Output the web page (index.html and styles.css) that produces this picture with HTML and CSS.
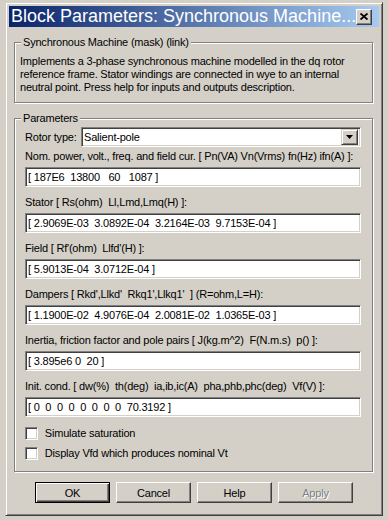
FILE: index.html
```html
<!DOCTYPE html>
<html lang="en">
<head>
    <meta charset="UTF-8">
    <title>Block Parameters: Synchronous Machine</title>
    <link rel="stylesheet" href="styles.css">
</head>
<body>
    <div class="window">
        <div class="titlebar">
            <span class="title">Block Parameters: Synchronous Machine...</span>
            <span class="close-btn">
                <svg width="8" height="7" viewBox="0 0 8 7"><path d="M0.5 0.5 L7.5 6.5 M7.5 0.5 L0.5 6.5" stroke="#000" stroke-width="1.8" fill="none"/></svg>
            </span>
        </div>

        <fieldset class="group">
            <legend>Synchronous Machine (mask) (link)</legend>
            <div class="desc">
                Implements a 3-phase synchronous machine modelled in the dq rotor<br>
                reference frame. Stator windings are connected in wye to an internal<br>
                neutral point. Press help for inputs and outputs description.
            </div>
        </fieldset>

        <fieldset class="group">
            <legend>Parameters</legend>
            <div class="params">
                <div class="rotor-row">
                    <label>Rotor type:</label>
                    <div class="dropdown">
                        <span class="dropdown-value">Salient-pole</span>
                        <span class="dropdown-btn">
                            <svg width="7" height="4" viewBox="0 0 7 4"><path d="M0 0 H7 L3.5 4 Z" fill="#000"/></svg>
                        </span>
                    </div>
                </div>

                <div class="field">
                    <label>Nom. power, volt., freq. and field cur. [ Pn(VA) Vn(Vrms) fn(Hz) ifn(A) ]:</label>
                    <input type="text" value="[ 187E6  13800   60   1087 ]">
                </div>
                <div class="field">
                    <label>Stator [ Rs(ohm)  Ll,Lmd,Lmq(H) ]:</label>
                    <input type="text" value="[ 2.9069E-03  3.0892E-04  3.2164E-03  9.7153E-04 ]">
                </div>
                <div class="field">
                    <label>Field [ Rf'(ohm)  Llfd'(H) ]:</label>
                    <input type="text" value="[ 5.9013E-04  3.0712E-04 ]">
                </div>
                <div class="field">
                    <label>Dampers [ Rkd',Llkd'  Rkq1',Llkq1'  ] (R=ohm,L=H):</label>
                    <input type="text" value="[ 1.1900E-02  4.9076E-04  2.0081E-02  1.0365E-03 ]">
                </div>
                <div class="field">
                    <label>Inertia, friction factor and pole pairs [ J(kg.m^2)  F(N.m.s)  p() ]:</label>
                    <input type="text" value="[ 3.895e6 0  20 ]">
                </div>
                <div class="field last">
                    <label>Init. cond. [ dw(%)  th(deg)  ia,ib,ic(A)  pha,phb,phc(deg)  Vf(V) ]:</label>
                    <input type="text" value="[ 0  0  0  0  0  0  0  0  70.3192 ]">
                </div>

                <label class="check"><input type="checkbox"> Simulate saturation</label>
                <label class="check"><input type="checkbox"> Display Vfd which produces nominal Vt</label>
            </div>
        </fieldset>

        <div class="buttons">
            <button class="btn default">OK</button>
            <button class="btn">Cancel</button>
            <button class="btn">Help</button>
            <button class="btn disabled">Apply</button>
        </div>
    </div>
</body>
</html>
```

FILE: styles.css
```css
body {
    margin: 0;
    background: #d4d0c8;
    font-family: "Liberation Sans", Arial, sans-serif;
    font-size: 11px;
    letter-spacing: -0.2px;
    color: #000;
}
.window {
    box-sizing: border-box;
    width: 378px;
    height: 514px;
    margin: 2px 0 0 5px;
    border: 1px solid;
    border-color: #d4d0c8 #404040 #404040 #d4d0c8;
    box-shadow: inset 1px 1px #fff, inset -1px -1px #808080;
    padding: 3px;
    display: flex;
    flex-direction: column;
}
.titlebar {
    height: 21px;
    flex-shrink: 0;
    background: linear-gradient(to right, #0a246a, #a6caf0);
    display: flex;
    align-items: center;
    padding: 0 7px 0 2px;
}
.title {
    flex: 1;
    color: #fff;
    font-size: 18px;
    letter-spacing: 0;
    line-height: 21px;
    white-space: nowrap;
}
.close-btn {
    box-sizing: border-box;
    width: 16px;
    height: 16px;
    background: #d4d0c8;
    border: 1px solid;
    border-color: #fff #404040 #404040 #fff;
    box-shadow: inset -1px -1px #808080;
    display: flex;
    align-items: center;
    justify-content: center;
}
.group {
    margin: 8px 6px 0 5px;
    padding: 0;
    min-width: 0;
    border: 1px solid #808080;
    box-shadow: inset 1px 1px #fff, 1px 1px #fff;
}
.group legend {
    padding: 0 2px;
    margin-left: 6px;
    line-height: 14px;
    background: #d4d0c8;
}
.desc {
    padding: 6px 8px 8px 5px;
    line-height: 13px;
}
.params {
    padding: 2px 11px 8px 10px;
    display: flex;
    flex-direction: column;
}
.rotor-row {
    display: flex;
    align-items: center;
    height: 20px;
    margin-bottom: 2px;
}
.rotor-row label {
    width: 56px;
}
.dropdown, .field input {
    box-sizing: border-box;
    height: 20px;
    background: #fff;
    border: 1px solid;
    border-color: #808080 #fff #fff #808080;
    box-shadow: inset 1px 1px #404040, inset -1px -1px #d4d0c8;
}
.dropdown {
    flex: 1;
    display: flex;
    align-items: center;
    padding: 1px 2px 1px 2px;
}
.dropdown-value {
    flex: 1;
}
.dropdown-btn {
    box-sizing: border-box;
    width: 17px;
    height: 16px;
    background: #d4d0c8;
    border: 1px solid;
    border-color: #d4d0c8 #404040 #404040 #d4d0c8;
    box-shadow: inset 1px 1px #fff, inset -1px -1px #808080;
    display: flex;
    align-items: center;
    justify-content: center;
}
.field {
    display: flex;
    flex-direction: column;
    gap: 4px;
    margin-bottom: 8px;
}
.field.last {
    margin-bottom: 6px;
}
.field label {
    line-height: 14px;
    white-space: pre;
}
.field input {
    margin: 0;
    padding: 0 2px;
    font: inherit;
    letter-spacing: inherit;
    color: #000;
    outline: none;
}
.check {
    display: flex;
    align-items: center;
    gap: 4px;
    height: 20px;
    white-space: pre;
}
.check input {
    appearance: none;
    box-sizing: border-box;
    width: 13px;
    height: 13px;
    margin: 0;
    background: #fff;
    border: 1px solid;
    border-color: #808080 #fff #fff #808080;
    box-shadow: inset 1px 1px #404040, inset -1px -1px #d4d0c8;
}
.buttons {
    display: flex;
    justify-content: center;
    gap: 6px;
    margin-top: 10px;
}
.btn {
    box-sizing: border-box;
    width: 75px;
    height: 21px;
    margin: 0;
    padding: 0;
    font: inherit;
    letter-spacing: inherit;
    color: #000;
    background: #d4d0c8;
    border: 1px solid;
    border-color: #fff #404040 #404040 #fff;
    box-shadow: inset -1px -1px #808080;
}
.btn.default {
    border-color: #000;
    box-shadow: inset 1px 1px #fff, inset -1px -1px #404040, inset -2px -2px #808080;
}
.btn.disabled {
    color: #808080;
    text-shadow: 1px 1px #fff;
}
```
